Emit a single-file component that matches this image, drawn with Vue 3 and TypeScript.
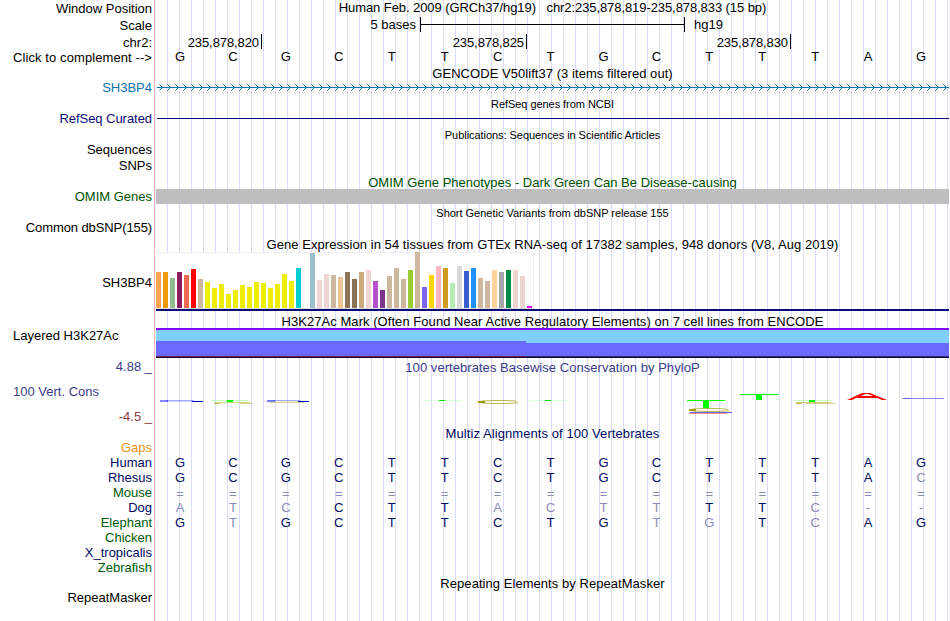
<!-- App.vue: genome browser tracks -->
<script setup lang="ts">
interface Label {
  text: string;
  height: number;
  tone?: string;
  left?: boolean;
}

interface AlignRow {
  species: string;
  bases: string;
  faded?: number[];
  gap?: boolean;
}

const labels: Label[] = [
  { text: "Window Position", height: 17 },
  { text: "Scale", height: 17 },
  { text: "chr2:", height: 15 },
  { text: "Click to complement -->", height: 30, tone: "wide" },
  { text: "SH3BP4", height: 31, tone: "gene" },
  { text: "RefSeq Curated", height: 31, tone: "refseq" },
  { text: "Sequences", height: 16 },
  { text: "SNPs", height: 31 },
  { text: "OMIM Genes", height: 31, tone: "omim" },
  { text: "Common dbSNP(155)", height: 55, tone: "narrow" },
  { text: "SH3BP4", height: 53 },
  { text: "Layered H3K27Ac", height: 31, left: true },
  { text: "4.88 _", height: 25, tone: "cons" },
  { text: "100 Vert. Cons", height: 25, tone: "cons", left: true },
  { text: "-4.5 _", height: 31, tone: "neg" },
  { text: "Gaps", height: 15, tone: "gaps" },
  { text: "Human", height: 15, tone: "navy" },
  { text: "Rhesus", height: 15, tone: "navy" },
  { text: "Mouse", height: 15, tone: "green" },
  { text: "Dog", height: 15, tone: "navy" },
  { text: "Elephant", height: 15, tone: "green" },
  { text: "Chicken", height: 15, tone: "green" },
  { text: "X_tropicalis", height: 15, tone: "navy" },
  { text: "Zebrafish", height: 30, tone: "green" },
  { text: "RepeatMasker", height: 15 },
];

const sequence = "GCGCTTCTGCTTTAG";
const positions = ["235,878,820", "235,878,825", "235,878,830"];

const alignment: AlignRow[] = [
  { species: "Human", bases: sequence },
  { species: "Rhesus", bases: "GCGCTTCTGCTTTAC", faded: [14] },
  { species: "Mouse", bases: "===============", gap: true },
  { species: "Dog", bases: "ATCCTTACTTTTC--", faded: [0, 1, 2, 6, 7, 8, 9, 12, 13, 14] },
  { species: "Elephant", bases: "GTGCTTCTGTGTCAG", faded: [1, 9, 10, 12] },
];

// [color, height] per GTEx tissue
const tissues: [string, number][] = [
  ["#ffa54f", 36], ["#ee9a00", 36], ["#8fbc8f", 30], ["#8b1c62", 36],
  ["#ee6a50", 33], ["#ff0000", 39], ["#cdb79e", 29], ["#eeee00", 26],
  ["#eeee00", 20], ["#eeee00", 24], ["#eeee00", 14], ["#eeee00", 18],
  ["#eeee00", 23], ["#eeee00", 21], ["#eeee00", 26], ["#eeee00", 25],
  ["#eeee00", 20], ["#eeee00", 24], ["#eeee00", 34], ["#eeee00", 27],
  ["#00cdcd", 40], ["#ee82ee", 0], ["#9ac0cd", 55], ["#eed5d2", 28],
  ["#eed5d2", 34], ["#cdb79e", 33], ["#eec591", 31], ["#8b7355", 36],
  ["#8b7355", 29], ["#cdaa7d", 36], ["#eed5d2", 38], ["#b452cd", 27],
  ["#7a378b", 18], ["#cdb79e", 32], ["#cdb79e", 40], ["#cdb79e", 29],
  ["#9acd32", 38], ["#cdb79e", 56], ["#7a67ee", 21], ["#ffd700", 33],
  ["#ffb6c1", 42], ["#cd9b1d", 40], ["#b4eeb4", 25], ["#d9d9d9", 42],
  ["#3a5fcd", 37], ["#1e90ff", 40], ["#cdb79e", 30], ["#cdb79e", 27],
  ["#ffd39b", 38], ["#a6a6a6", 36], ["#008b45", 38], ["#eed5d2", 38],
  ["#eed5d2", 32], ["#ff00ff", 2],
];
</script>

<template>
  <div class="browser">
    <div class="labels">
      <div
        v-for="(label, i) in labels"
        :key="i"
        :class="[label.tone, { left: label.left }]"
        :style="{ height: `${label.height}px` }"
      >
        {{ label.text }}
      </div>
    </div>

    <div class="tracks">
      <div class="title position">
        Human Feb. 2009 (GRCh37/hg19)&nbsp;&nbsp; chr2:235,878,819-235,878,833 (15 bp)
      </div>
      <div class="scale">
        <span class="scale-size">5 bases</span>
        <span class="bracket"></span>
        <span>hg19</span>
      </div>
      <div class="ruler">
        <span v-for="pos in positions" :key="pos">{{ pos }}</span>
      </div>
      <div class="bases">
        <span v-for="(base, i) in sequence" :key="i">{{ base }}</span>
      </div>

      <div class="title gencode">GENCODE V50lift37 (3 items filtered out)</div>
      <svg class="gene-line" width="793" height="7">
        <defs>
          <pattern id="strand" width="8" height="7" patternUnits="userSpaceOnUse">
            <path d="M3.5 0.5L6.5 3.5L3.5 6.5" fill="none" stroke="#0c72b0" />
          </pattern>
        </defs>
        <rect x="1" width="792" height="7" fill="url(#strand)" />
        <rect x="1" y="3" width="792" height="1" fill="#0c72b0" />
      </svg>

      <div class="title small refseq-title">RefSeq genes from NCBI</div>
      <div class="refseq-line"></div>
      <div class="title small pubs">Publications: Sequences in Scientific Articles</div>
      <div class="title omim-title">OMIM Gene Phenotypes - Dark Green Can Be Disease-causing</div>
      <div class="omim-bar"></div>
      <div class="title small snps">Short Genetic Variants from dbSNP release 155</div>

      <div class="title gtex-title">
        Gene Expression in 54 tissues from GTEx RNA-seq of 17382 samples, 948 donors (V8, Aug 2019)
      </div>
      <div class="gtex">
        <i
          v-for="([color, height], i) in tissues"
          :key="i"
          :style="{ height: `${height}px`, background: color }"
        ></i>
      </div>
      <div class="gtex-line"></div>

      <div class="title h3k-title">
        H3K27Ac Mark (Often Found Near Active Regulatory Elements) on 7 cell lines from ENCODE
      </div>
      <div class="h3k">
        <div class="h3k-left"></div>
        <div class="h3k-right"></div>
      </div>

      <div class="title cons phylop-title">100 vertebrates Basewise Conservation by PhyloP</div>
      <svg class="phylop" width="793" height="50" viewBox="156 376 793 50">
        <g fill="#2222ff">
          <rect x="160" y="400" width="8" height="2" opacity="0.55" />
          <rect x="166" y="400" width="28" height="1" opacity="0.4" />
          <rect x="166" y="401" width="30" height="1" opacity="0.2" />
          <rect x="192" y="401" width="11" height="1" fill="#0000c0" />
          <rect x="267" y="400" width="8" height="2" opacity="0.6" />
          <rect x="273" y="400" width="28" height="1" opacity="0.4" />
          <rect x="298" y="401" width="11" height="1" fill="#0000c0" />
        </g>
        <rect x="270" y="402" width="34" height="1" fill="#a09a00" opacity="0.4" />
        <rect x="272" y="401" width="26" height="1" fill="#a09a00" opacity="0.2" />

        <g fill="#00ff00">
          <rect x="211" y="400" width="37" height="1" opacity="0.25" />
          <rect x="227" y="400" width="6" height="2" />
          <rect x="423" y="400" width="38" height="1" opacity="0.14" />
          <rect x="439" y="400" width="6" height="1" fill="#00e000" />
          <rect x="529" y="400" width="38" height="1" opacity="0.14" />
          <rect x="545" y="400" width="6" height="1" fill="#00e000" />
          <rect x="687" y="400" width="38" height="1" />
          <rect x="703" y="400" width="6" height="8" />
          <rect x="740" y="394" width="38" height="1" />
          <rect x="756" y="394" width="6" height="6" />
          <rect x="793" y="400" width="38" height="1" opacity="0.25" />
          <rect x="809" y="400" width="6" height="2" />
        </g>

        <g fill="#a09a00">
          <rect x="214" y="402" width="36" height="1" opacity="0.45" />
          <rect x="214" y="403" width="6" height="1" opacity="0.6" />
          <rect x="240" y="403" width="13" height="1" opacity="0.45" />
          <rect x="796" y="402" width="35" height="1" opacity="0.5" />
          <rect x="796" y="403" width="6" height="1" opacity="0.7" />
          <rect x="806" y="403" width="29" height="1" opacity="0.45" />
        </g>
        <g fill="none" stroke="#a09a00" stroke-opacity="0.7">
          <path d="M517 401.5Q516 400.5 498 400.5Q479 400.5 479 402Q479 403.5 498 403.5Q516 403.5 518 402.5" />
          <path d="M478 402H485" stroke-width="2" stroke-opacity="1" />
          <path d="M728 409.5Q726 408.5 709 408.5Q690 408.5 690 410Q690 411.5 709 411.5Q727 411.5 729 410.5" />
          <path d="M689 410H696" stroke-width="2" stroke-opacity="1" />
        </g>
        <rect x="690" y="412" width="42" height="1" fill="#4040ff" opacity="0.8" />
        <rect x="689" y="413" width="38" height="1" fill="#ff0000" opacity="0.4" />

        <g fill="#ff0000">
          <path d="M847 400L862 393H870L887 400H882L875 397H858L852 400ZM861 396H873L868 394H865Z" fill-rule="evenodd" />
          <rect x="857" y="397" width="20" height="1" />
        </g>
        <rect x="902" y="398" width="42" height="1" fill="#4040ff" opacity="0.6" />
        <rect x="904" y="398" width="6" height="1" fill="#4040ff" opacity="0.6" />
      </svg>

      <div class="title navy multiz-title">Multiz Alignments of 100 Vertebrates</div>
      <div class="alignment">
        <div
          v-for="row in alignment"
          :key="row.species"
          class="bases navy"
          :class="{ gap: row.gap }"
        >
          <span
            v-for="(base, i) in row.bases"
            :key="i"
            :class="{ faded: row.gap || row.faded?.includes(i) }"
          >{{ base }}</span>
        </div>
      </div>

      <div class="title repeat-title">Repeating Elements by RepeatMasker</div>
    </div>
  </div>
</template>

<style>
body {
  margin: 0;
  background: #fff;
}
</style>

<style scoped>
.browser {
  display: flex;
  width: 950px;
  height: 621px;
  overflow: hidden;
  font: 13px/15px "Liberation Sans", Arial, sans-serif;
  color: #000;
  white-space: nowrap;
}

.labels {
  box-sizing: border-box;
  width: 154px;
  padding: 1px 2px 0 13px;
  text-align: right;
}

.labels .left {
  text-align: left;
}

.wide {
  letter-spacing: 0.09px;
}

.narrow {
  letter-spacing: -0.1px;
}

.tracks {
  display: flex;
  flex-direction: column;
  box-sizing: border-box;
  width: 796px;
  padding: 0 1px;
  border-left: 1px solid #ffb4b4;
  background: linear-gradient(to right, #dcdcf8 1px, transparent 1px) 12px 0 / 12px 100%;
  background-clip: content-box;
}

.title {
  height: 15px;
  text-align: center;
  letter-spacing: 0.05px;
}

.position {
  letter-spacing: -0.08px;
}

.small {
  font-size: 11px;
  letter-spacing: -0.05px;
}

.gene {
  color: #0c72b0;
}

.refseq {
  color: #0c0c78;
  letter-spacing: -0.05px;
}

.omim,
.omim-title {
  color: #005000;
  letter-spacing: 0;
}

.cons {
  color: #3c3c8c;
}

.neg {
  color: #8c3c3c;
}

.gaps {
  color: #e69116;
}

.navy {
  color: #000a64;
}

.green {
  color: #005a0a;
}

.scale {
  display: flex;
  height: 15px;
  margin-top: 2px;
}

.scale-size {
  width: 260px;
  margin-right: 4px;
  text-align: right;
}

.bracket {
  box-sizing: border-box;
  width: 265px;
  height: 15px;
  margin-right: 9px;
  border: solid #000;
  border-width: 0 1px;
  background: linear-gradient(#000, #000) 0 7px / 100% 1px no-repeat;
}

.ruler {
  display: grid;
  grid-template-columns: 106px 265px 264px;
  height: 15px;
  margin-top: 2px;
  line-height: 17px;
  letter-spacing: -0.09px;
}

.ruler span {
  height: 15px;
  padding-right: 2px;
  border-right: 1px solid #000;
  text-align: right;
}

.bases {
  display: flex;
  width: 794px;
  height: 15px;
  margin-left: -2.5px;
}

.bases span {
  flex: 1;
  text-align: center;
}

.bases.gap {
  line-height: 17px;
}

.faded {
  color: #8c8cb8;
}

.gencode {
  margin-top: 2px;
}

.gene-line {
  display: block;
  margin-top: 3px;
}

.refseq-title {
  margin-top: 6px;
}

.refseq-line {
  height: 1px;
  margin: 6px 0 0 1px;
  background: #0c0c78;
}

.pubs {
  margin-top: 9px;
}

.omim-title {
  height: 14px;
  margin-top: 32px;
  overflow: hidden;
}

.omim-bar {
  height: 15px;
  background: #bebebe;
}

.snps {
  margin-top: 2px;
  letter-spacing: -0.02px;
}

.gtex-title {
  margin-top: 16px;
}

.gtex {
  display: flex;
  align-items: flex-end;
  gap: 2px;
  box-sizing: border-box;
  width: 378px;
  height: 57px;
  border: solid #f0f0f0;
  border-width: 1px 1px 1px 0;
  border-bottom-color: #dcdcdc;
  background: #fff;
}

.gtex i {
  flex: none;
  width: 5px;
}

.gtex-line {
  height: 2px;
  background: #0c0c78;
}

.h3k-title {
  height: 14px;
  margin-top: 3px;
  overflow: hidden;
}

.h3k {
  display: flex;
  box-sizing: border-box;
  height: 30px;
  border-top: 2px solid #8000ff;
  border-bottom: 1px solid #100830;
}

.h3k-left {
  box-sizing: border-box;
  width: 370px;
  border-top: 11px solid #80d0ff;
  border-bottom: 1px solid #702060;
  background: #6a6aff;
}

.h3k-right {
  box-sizing: border-box;
  flex: 1;
  border-top: 13px solid #80d0ff;
  border-bottom: 1px solid #302870;
  background: #6a6aff;
}

.phylop-title {
  margin-top: 2px;
}

.phylop {
  display: block;
  margin-top: 1px;
}

.multiz-title {
  letter-spacing: 0.08px;
}

.alignment {
  margin-top: 14px;
}

.repeat-title {
  margin-top: 46px;
}
</style>
